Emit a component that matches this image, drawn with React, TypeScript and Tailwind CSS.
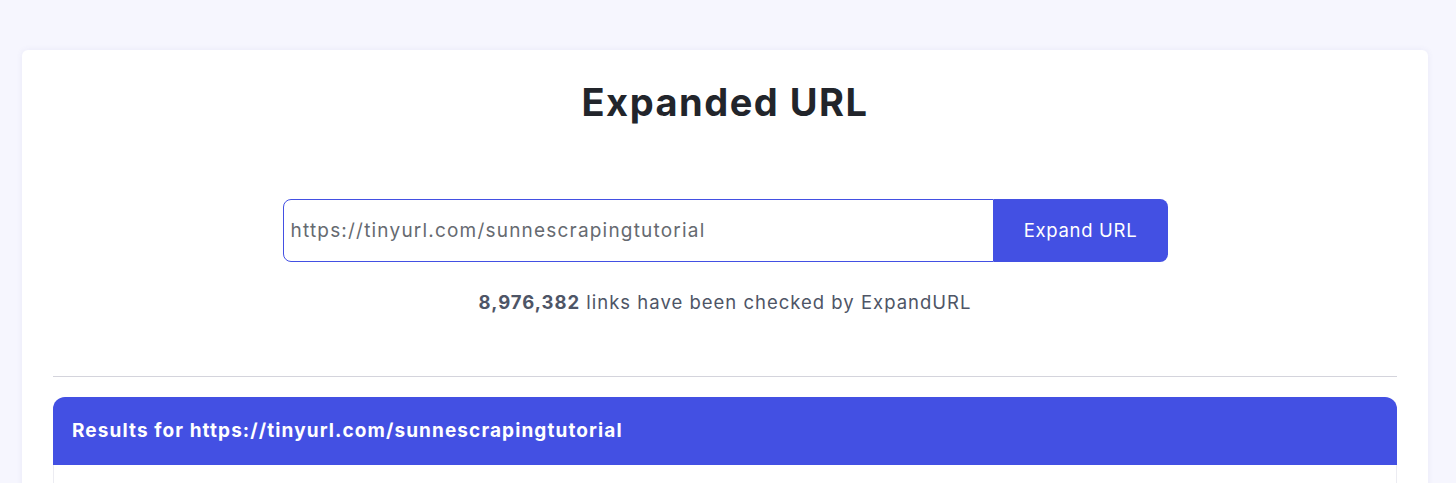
export default function App() {
  const url = "https://tinyurl.com/sunnescrapingtutorial";

  return (
    <div className="min-h-screen bg-[#f6f6fe] pl-[22px] pr-[28px] pt-[50px] font-['Inter','Open_Sans',sans-serif]">
      <div className="rounded-md bg-white px-[31px] pt-[32px] shadow-[0_0_6px_rgba(80,80,160,0.08)]">
        <h1 className="text-center text-[38px] font-bold leading-[40px] tracking-[1.5px] text-[#22252b]">
          Expanded URL
        </h1>

        {/* Search box */}
        <div className="mt-[77px] flex justify-center">
          <div className="flex h-[63px] w-[885px]">
            <input
              readOnly
              value={url}
              className="h-full flex-1 rounded-l-lg border border-[#4350e3] bg-white px-[7px] text-[19px] tracking-[1.2px] text-[#666a70] outline-none"
            />
            <button className="h-full w-[174px] rounded-r-lg bg-[#4350e3] text-[18.5px] tracking-[0.7px] text-white">
              Expand URL
            </button>
          </div>
        </div>

        <p className="mt-[26px] text-center text-[18.5px] leading-7 tracking-[1px] text-[#4e5566]">
          <span className="font-bold">8,976,382</span> links have been checked by ExpandURL
        </p>

        <div className="mt-[60px] border-t border-[#d4d4dc]" />

        {/* Results */}
        <div className="mt-[20px] rounded-t-xl border-x border-[#ececf2]">
          <div className="-mx-px flex h-[68px] items-center rounded-t-xl bg-[#4350e3] px-[19px]">
            <span className="text-[19px] font-bold tracking-[1.1px] text-white">Results for {url}</span>
          </div>
          <div className="h-[40px] bg-white" />
        </div>
      </div>
    </div>
  );
}
